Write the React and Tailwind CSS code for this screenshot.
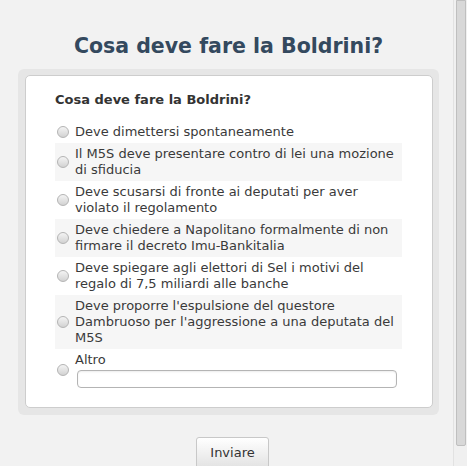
const options = [
  "Deve dimettersi spontaneamente",
  "Il M5S deve presentare contro di lei una mozione di sfiducia",
  "Deve scusarsi di fronte ai deputati per aver violato il regolamento",
  "Deve chiedere a Napolitano formalmente di non firmare il decreto Imu-Bankitalia",
  "Deve spiegare agli elettori di Sel i motivi del regalo di 7,5 miliardi alle banche",
  "Deve proporre l'espulsione del questore Dambruoso per l'aggressione a una deputata del M5S",
];

const Radio = () => (
  <span className="ml-[2px] mr-[6px] h-[12px] w-[12px] shrink-0 rounded-full border border-[#b4b4b4] bg-gradient-to-b from-[#f4f4f4] to-[#d2d2d2]" />
);

export default function App() {
  return (
    <div
      className="flex h-[466px] w-[467px] overflow-hidden bg-[#f2f2f2] text-[#3a3a3a]"
      style={{ fontFamily: '"DejaVu Sans", Verdana, sans-serif' }}
    >
      <div className="flex w-[453px] flex-col">
        <h1 className="pl-[4px] pt-[33px] text-center text-[20.5px] font-bold leading-[26px] text-[#34495e]">
          Cosa deve fare la Boldrini?
        </h1>

        {/* outer panel */}
        <div className="ml-[18px] mt-[10px] w-[421px] rounded-[6px] bg-[#e6e6e6] pb-[7px] pl-[7px] pr-[6px] pt-[6px]">
          <div className="rounded-[5px] border border-[#cdcdcd] bg-white pb-[16px] pl-[29px] pr-[30px] pt-[16px]">
            <h2 className="text-[13px] font-bold leading-[16px] text-[#333]">Cosa deve fare la Boldrini?</h2>

            <div className="mt-[13px] flex flex-col">
              {options.map((text, i) => (
                <label
                  key={i}
                  className={`flex items-center py-[3px] text-[13px] leading-[16px] ${i % 2 === 1 ? "bg-[#f6f6f6]" : ""}`}
                >
                  <Radio />
                  <span>{text}</span>
                </label>
              ))}
              <label className="flex items-center py-[3px] text-[13px] leading-[16px]">
                <Radio />
                <div className="flex flex-col">
                  <span>Altro</span>
                  <input
                    type="text"
                    className="ml-[2px] mt-[2px] h-[18px] w-[320px] rounded-[4px] border border-[#b4b4b4] bg-white shadow-[inset_0_1px_2px_rgba(0,0,0,0.08)] outline-none"
                  />
                </div>
              </label>
            </div>
          </div>
        </div>

        <div className="mt-[22px] pl-[196px]">
          <button className="h-[32px] w-[73px] rounded-[3px] border border-[#c8c8c8] bg-gradient-to-b from-white to-[#e2e2e2] text-[13px] text-[#333]">
            Inviare
          </button>
        </div>
      </div>

      {/* scrollbar */}
      <div className="flex w-[14px] border-l border-[#e2e2e2] bg-[#f0f0f0] pl-[2px]">
        <div className="h-[446px] w-[10px] rounded-b-[2px] border border-[#bfbfbf] bg-[#d8d8d8]" />
      </div>
    </div>
  );
}
